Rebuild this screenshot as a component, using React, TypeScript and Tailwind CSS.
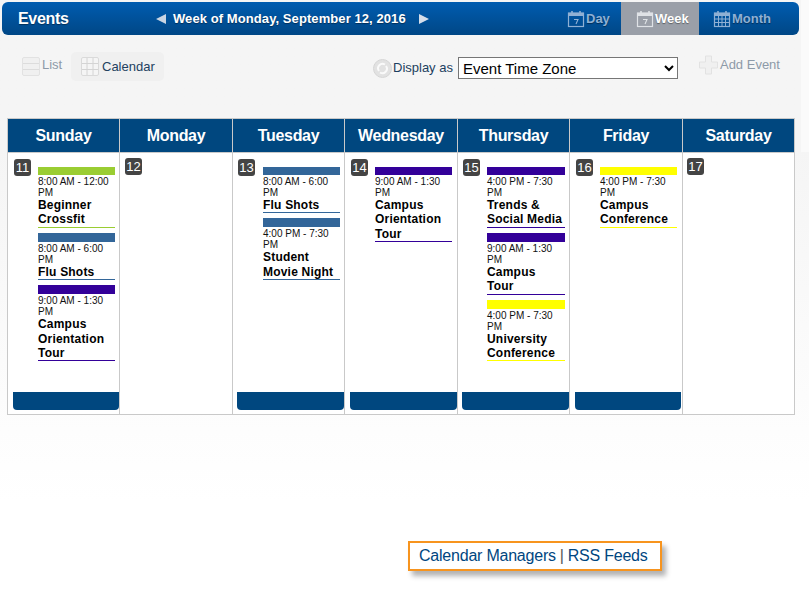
import React from "react";

type CalEvent = { time: string; title: string[]; color: string; barH: string; line: string };

const green = { color: "bg-[#9acd32]", line: "border-[#9acd32]" };
const steel = { color: "bg-[#336699]", line: "border-[#336699]" };
const purple = { color: "bg-[#330099]", line: "border-[#330099]" };
const yellow = { color: "bg-[#ffff00]", line: "border-[#ffff00]" };

const days: {
  name: string;
  num: number;
  width: string;
  foot: string;
  badge: string;
  pad: string;
  events: CalEvent[];
}[] = [
  {
    name: "Sunday",
    num: 11,
    width: "w-[111px]",
    foot: "ml-[5px]",
    badge: "ml-[6px] mt-[6px]",
    pad: "pl-[30px] pr-[4px]",
    events: [
      { time: "8:00 AM - 12:00 PM", title: ["Beginner", "Crossfit"], barH: "h-[8px]", ...green },
      { time: "8:00 AM - 6:00 PM", title: ["Flu Shots"], barH: "h-[9px]", ...steel },
      { time: "9:00 AM - 1:30 PM", title: ["Campus", "Orientation", "Tour"], barH: "h-[9px]", ...purple },
    ],
  },
  { name: "Monday", num: 12, width: "w-[113px]", foot: "", badge: "ml-[5px] mt-[5px]", pad: "", events: [] },
  {
    name: "Tuesday",
    num: 13,
    width: "w-[112px]",
    foot: "ml-[4px]",
    badge: "ml-[5px] mt-[6px]",
    pad: "pl-[30px] pr-[4px]",
    events: [
      { time: "8:00 AM - 6:00 PM", title: ["Flu Shots"], barH: "h-[8px]", ...steel },
      { time: "4:00 PM - 7:30 PM", title: ["Student", "Movie Night"], barH: "h-[9px]", ...steel },
    ],
  },
  {
    name: "Wednesday",
    num: 14,
    width: "w-[113px]",
    foot: "ml-[5px]",
    badge: "ml-[6px] mt-[6px]",
    pad: "pl-[30px] pr-[5px]",
    events: [{ time: "9:00 AM - 1:30 PM", title: ["Campus", "Orientation", "Tour"], barH: "h-[8px]", ...purple }],
  },
  {
    name: "Thursday",
    num: 15,
    width: "w-[112px]",
    foot: "ml-[4px]",
    badge: "ml-[5px] mt-[6px]",
    pad: "pl-[29px] pr-[4px]",
    events: [
      { time: "4:00 PM - 7:30 PM", title: ["Trends &", "Social Media"], barH: "h-[8px]", ...purple },
      { time: "9:00 AM - 1:30 PM", title: ["Campus", "Tour"], barH: "h-[9px]", ...purple },
      { time: "4:00 PM - 7:30 PM", title: ["University", "Conference"], barH: "h-[9px]", ...yellow },
    ],
  },
  {
    name: "Friday",
    num: 16,
    width: "w-[113px]",
    foot: "ml-[5px] mr-[1px]",
    badge: "ml-[6px] mt-[6px]",
    pad: "pl-[30px] pr-[5px]",
    events: [{ time: "4:00 PM - 7:30 PM", title: ["Campus", "Conference"], barH: "h-[8px]", ...yellow }],
  },
  { name: "Saturday", num: 17, width: "w-[112px]", foot: "", badge: "ml-[4px] mt-[5px]", pad: "", events: [] },
];

const CalIcon = ({ month = false }: { month?: boolean }) => (
  <svg width="18" height="18" viewBox="0 0 18 18" fill="none" stroke="currentColor" className="shrink-0">
    <rect x="1.5" y="3" width="15" height="13.5" strokeWidth="1.2" />
    <rect x="1.5" y="3" width="15" height="3" fill="currentColor" strokeWidth="0" />
    <path d="M5 1v3M13 1v3" strokeWidth="1.6" />
    {month ? (
      <path d="M1.5 9h15M1.5 12.5h15M5.5 6v10M9 6v10M12.5 6v10" strokeWidth="1" />
    ) : (
      <path d="M7 9.5h4l-2 4.5" strokeWidth="1.1" />
    )}
  </svg>
);

const Event = ({ ev }: { ev: CalEvent }) => (
  <div className="mb-[5px]">
    <div className={`${ev.barH} ${ev.color}`} />
    <div className="text-[10px] leading-[11px] text-[#111] mt-[1px]">{ev.time}</div>
    <div className={`border-b ${ev.line} text-[12px] leading-[14.4px] font-bold tracking-[0.2px] text-black`}>
      {ev.title.map((t) => (
        <div key={t} className="whitespace-nowrap">
          {t}
        </div>
      ))}
    </div>
  </div>
);

export default function App() {
  return (
    <div className="relative w-[809px] h-[590px] overflow-hidden bg-gradient-to-b from-[#f5f5f5] from-[25%] to-white to-[85%] font-['Liberation_Sans',Arial,sans-serif]">
      {/* scrollbar strip on the right */}
      <div className="absolute right-0 top-0 w-[8px] h-[152px] bg-[#fafafa]" />

      <div className="px-[2px] pt-[2px]">
        <header className="flex items-stretch h-[33px] w-[797px] rounded-[6px] overflow-hidden bg-gradient-to-b from-[#005cb0] to-[#004786] text-white font-bold [text-shadow:0_1px_1px_rgba(0,0,0,0.4)]">
          <div className="w-[154px] pl-[16px] flex items-center text-[16px] tracking-[-0.3px]">Events</div>
          <div className="flex items-center text-[13px] tracking-[0.08px] w-[411px] whitespace-nowrap">
            <span className="w-0 h-0 border-y-[5px] border-y-transparent border-r-[10px] border-r-[#c9d5e3] mr-[7px]" />
            Week of Monday, September 12, 2016
            <span className="w-0 h-0 border-y-[5px] border-y-transparent border-l-[10px] border-l-[#d5deea] ml-[13px]" />
          </div>
          <div className="flex items-center gap-[1px] w-[54px] text-[#8fb0d4] text-[13px]">
            <CalIcon />
            <span>Day</span>
          </div>
          <div className="flex items-center gap-[1px] w-[78px] pl-[15px] bg-[#9a9fa8] text-[13px] text-white">
            <span className="text-[#dfe2e6]">
              <CalIcon />
            </span>
            <span>Week</span>
          </div>
          <div className="flex items-center gap-[1px] pl-[14px] text-[#8fb0d4] text-[13px]">
            <CalIcon month />
            <span>Month</span>
          </div>
        </header>

        <div className="flex items-start h-[83px] pt-[17px] text-[13px]">
          <div className="flex items-start w-[69px] pl-[20px] pt-[5px] text-[#8d9aa8]">
            <svg width="18" height="19" viewBox="0 0 18 19" className="shrink-0 mr-[2px]">
              <rect x="0.5" y="0.5" width="17" height="18" rx="1.5" fill="#f0f0f0" stroke="#e2e2e2" />
              <path d="M1 6.5h16M1 12.5h16" stroke="#dcdcdc" strokeWidth="1" />
            </svg>
            <span className="leading-[15px]">List</span>
          </div>
          <div className="flex items-center h-[29px] w-[93px] pl-[10px] rounded-[5px] bg-[#f0f0f0] text-[#23415f]">
            <svg width="18" height="19" viewBox="0 0 18 19" className="shrink-0 mr-[3px]">
              <rect x="0.5" y="0.5" width="17" height="18" rx="1.5" fill="#f5f5f5" stroke="#dadada" />
              <path d="M6 1v17M12 1v17M1 6.5h16M1 12.5h16" stroke="#d4d4d4" strokeWidth="1" />
            </svg>
            <span>Calendar</span>
          </div>
          <div className="flex items-center ml-[209px] pt-[5px]">
            <svg width="19" height="19" viewBox="0 0 19 19" className="shrink-0 mr-[1px]">
              <circle cx="9.5" cy="9.5" r="9" fill="#e2e2e2" stroke="#d6d6d6" />
              <path d="M6 12a4.5 4.5 0 0 1 6-6.5M13 7a4.5 4.5 0 0 1-6 6.5" fill="none" stroke="#fafafa" strokeWidth="2" />
            </svg>
            <span className="text-[#1c3f60] mr-[5px] whitespace-nowrap">Display as</span>
            <select className="w-[220px] h-[22px] border border-[#767676] bg-white text-[15px] text-black pl-0">
              <option>Event Time Zone</option>
            </select>
          </div>
          <div className="flex items-center ml-[21px] text-[#8d9aa8] pt-[3px]">
            <svg width="19" height="20" viewBox="0 0 19 20" className="shrink-0">
              <path d="M6.5 1h6v6h6v6h-6v6h-6v-6h-6V7h6z" fill="#f0f0f0" stroke="#e2e2e2" />
            </svg>
            <span className="ml-[2px] whitespace-nowrap">Add Event</span>
          </div>
        </div>
      </div>

      <div className="ml-[7px] w-[788px] flex border border-[#c9c9c9]">
        {days.map((d, i) => (
          <div key={d.name} className={`${d.width} flex flex-col ${i > 0 ? "border-l border-[#c9c9c9]" : ""}`}>
            <div className="h-[33px] bg-[#00477f] flex items-center justify-center text-white text-[16px] tracking-[-0.3px] font-bold">
              {d.name}
            </div>
            <div className="h-[262px] border-t border-[#c9c9c9] bg-white flex flex-col">
              <div className="relative flex-1">
                <div
                  className={`absolute ${d.badge} w-[17px] h-[17px] rounded-[3px] bg-[#444] text-white text-[13px] leading-[17px] text-center`}
                >
                  {d.num}
                </div>
                <div className={`${d.pad} pt-[14px]`}>
                  {d.events.map((ev, j) => (
                    <Event key={j} ev={ev} />
                  ))}
                </div>
              </div>
              {d.foot && <div className={`h-[18px] ${d.foot} mb-[4px] bg-[#00477f] rounded-b-[4px]`} />}
            </div>
          </div>
        ))}
      </div>

      <div className="ml-[408px] mt-[126px] w-[254px] h-[30px] border-2 border-[#f7941e] bg-white shadow-[4px_5px_5px_rgba(0,0,0,0.3)] flex items-center pl-[9px] text-[16px] tracking-[-0.22px] text-[#004680] whitespace-nowrap">
        <span>Calendar Managers</span>
        <span className="text-[#555] mx-[4px]">|</span>
        <span>RSS Feeds</span>
      </div>
    </div>
  );
}
